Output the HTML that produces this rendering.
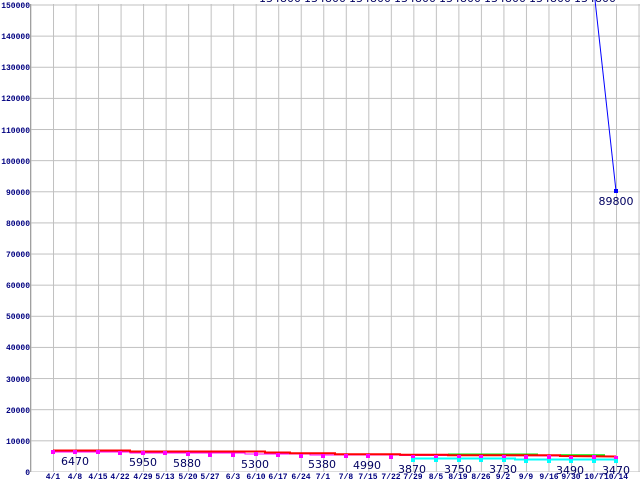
<!DOCTYPE html>
<html><head><style>
html,body{margin:0;padding:0;background:#fff;width:640px;height:480px;overflow:hidden}
svg{display:block}
.y{font:bold 8px "Liberation Mono",monospace;fill:#000080}
.x{font:bold 8px "Liberation Mono",monospace;fill:#000080}
.v{font:11px "DejaVu Sans","Liberation Sans",sans-serif;fill:#000060}
</style></head><body>
<svg width="640" height="480" xmlns="http://www.w3.org/2000/svg">
<defs>
<pattern id="pv" x="30.5" y="0" width="22.52" height="480" patternUnits="userSpaceOnUse"><rect x="0" y="0" width="1" height="480" fill="#c0c0c0"/></pattern>
<pattern id="ph" x="0" y="4.5" width="640" height="31.13" patternUnits="userSpaceOnUse"><rect x="0" y="0" width="640" height="1" fill="#c0c0c0"/></pattern>
</defs>
<rect x="30" y="4" width="610" height="468" fill="url(#pv)"/>
<rect x="30" y="4" width="610" height="468" fill="url(#ph)"/>
<rect x="30" y="4" width="1" height="468" fill="#a0a0a0"/>
<g class="y" text-anchor="end">
<text x="30" y="8">150000</text><text x="30" y="39">140000</text><text x="30" y="70">130000</text>
<text x="30" y="101">120000</text><text x="30" y="133">110000</text><text x="30" y="164">100000</text>
<text x="30" y="195">90000</text><text x="30" y="226">80000</text><text x="30" y="257">70000</text>
<text x="30" y="288">60000</text><text x="30" y="319">50000</text><text x="30" y="350">40000</text>
<text x="30" y="382">30000</text><text x="30" y="413">20000</text><text x="30" y="444">10000</text>
<text x="30" y="475">0</text>
</g>
<g class="v" text-anchor="middle">
<text x="280" y="2">134800</text><text x="325" y="2">134800</text><text x="370" y="2">134800</text>
<text x="415" y="2">134800</text><text x="460" y="2">134800</text><text x="505" y="2">134800</text>
<text x="550" y="2">134800</text><text x="595" y="2">134800</text>
</g>
<polyline points="595,0 616,191" fill="none" stroke="#0000ff" stroke-width="1"/>
<rect x="614" y="189" width="4" height="4" fill="#0000ff"/>
<polyline points="412,458.5 515,458.5 515,459.5 616,459.5" fill="none" stroke="#00ffff" stroke-width="2"/>
<line x1="448" y1="454.5" x2="538" y2="454.5" stroke="#00ee00" stroke-width="2"/>
<line x1="560" y1="455.3" x2="605" y2="455.3" stroke="#00ee00" stroke-width="2"/>
<polyline points="53,452 130,452 130,453 245,453 245,454 310,454 310,455 400,455 400,455.5 500,455.5 616,456.5" fill="none" stroke="#ff00ff" stroke-width="1"/>
<polyline points="53,450.5 130,450.5 130,451.5 265,451.5 265,452.5 290,452.5 290,453.3 335,453.3 335,454.3 400,454.3 400,454.8 448,454.8 448,455.3 560,455.3 560,456 616,456.5" fill="none" stroke="#ff0000" stroke-width="2"/>
<g fill="#ff00ff">
<rect x="51" y="450" width="4" height="4"/><rect x="73" y="450" width="4" height="4"/><rect x="96" y="450" width="4" height="4"/>
<rect x="118" y="451" width="4" height="4"/><rect x="141" y="451" width="4" height="4"/><rect x="163" y="451" width="4" height="4"/>
<rect x="186" y="452" width="4" height="4"/><rect x="208" y="453" width="4" height="4"/><rect x="231" y="453" width="4" height="4"/>
<rect x="254" y="452" width="4" height="4"/><rect x="276" y="453" width="4" height="4"/><rect x="299" y="454" width="4" height="4"/>
<rect x="321" y="454" width="4" height="4"/><rect x="344" y="454" width="4" height="4"/><rect x="366" y="454" width="4" height="4"/>
<rect x="389" y="455" width="4" height="4"/><rect x="411" y="455" width="4" height="4"/><rect x="434" y="455" width="4" height="4"/>
<rect x="457" y="455" width="4" height="4"/><rect x="479" y="455" width="4" height="4"/><rect x="502" y="455" width="4" height="4"/>
<rect x="524" y="455" width="4" height="4"/><rect x="547" y="455" width="4" height="4"/><rect x="569" y="456" width="4" height="4"/>
<rect x="592" y="455" width="4" height="4"/><rect x="614" y="456" width="4" height="4"/>
</g>
<g fill="#00ffff">
<rect x="411" y="458" width="4" height="4"/><rect x="434" y="458" width="4" height="4"/><rect x="457" y="458" width="4" height="4"/>
<rect x="479" y="458" width="4" height="4"/><rect x="502" y="458" width="4" height="4"/><rect x="524" y="459" width="4" height="4"/>
<rect x="547" y="459" width="4" height="4"/><rect x="569" y="459" width="4" height="4"/><rect x="592" y="459" width="4" height="4"/><rect x="614" y="459" width="4" height="4"/>
</g>
<g class="v" text-anchor="middle">
<text x="75" y="465">6470</text><text x="143" y="466">5950</text><text x="187" y="467">5880</text>
<text x="255" y="468">5300</text><text x="322" y="468">5380</text><text x="367" y="469">4990</text>
<text x="412" y="473">3870</text><text x="458" y="473">3750</text><text x="503" y="473">3730</text>
<text x="570" y="474">3490</text><text x="616" y="474">3470</text>
<text x="616" y="205">89800</text>
</g>
<g class="x" text-anchor="middle">
<text x="53" y="479">4/1</text><text x="75" y="479">4/8</text><text x="98" y="479">4/15</text>
<text x="120" y="479">4/22</text><text x="143" y="479">4/29</text><text x="165" y="479">5/13</text>
<text x="188" y="479">5/20</text><text x="210" y="479">5/27</text><text x="233" y="479">6/3</text>
<text x="256" y="479">6/10</text><text x="278" y="479">6/17</text><text x="301" y="479">6/24</text>
<text x="323" y="479">7/1</text><text x="346" y="479">7/8</text><text x="368" y="479">7/15</text>
<text x="391" y="479">7/22</text><text x="413" y="479">7/29</text><text x="436" y="479">8/5</text>
<text x="458" y="479">8/19</text><text x="481" y="479">8/26</text><text x="503" y="479">9/2</text>
<text x="526" y="479">9/9</text><text x="549" y="479">9/16</text><text x="571" y="479">9/30</text>
<text x="594" y="479">10/7</text><text x="616" y="479">10/14</text>
</g>
</svg>
</body></html>
